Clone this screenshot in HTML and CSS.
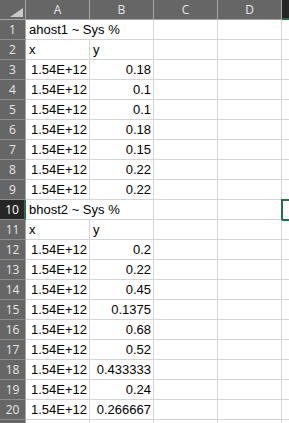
FILE: index.html
```html
<!DOCTYPE html>
<html lang="en">
<head>
  <meta charset="UTF-8">
  <title>Sheet1</title>
  <link rel="stylesheet" href="styles.css">
</head>
<body>
  <div class="sheet">
    <!-- column headers -->
    <div class="corner">
      <svg width="13" height="9" viewBox="0 0 13 9"><polygon points="0,9 13,0 13,9" fill="#c9c9c9"/></svg>
    </div>
    <div class="colhead">A</div>
    <div class="colhead">B</div>
    <div class="colhead">C</div>
    <div class="colhead">D</div>
    <div class="colhead active"></div>

    <div class="rowhead">1</div>
    <div class="cell span2">ahost1 ~ Sys %</div><div class="cell"></div><div class="cell"></div><div class="cell"></div>
    <div class="rowhead">2</div>
    <div class="cell">x</div><div class="cell">y</div><div class="cell"></div><div class="cell"></div><div class="cell"></div>
    <div class="rowhead">3</div>
    <div class="cell num">1.54E+12</div><div class="cell num">0.18</div><div class="cell"></div><div class="cell"></div><div class="cell"></div>
    <div class="rowhead">4</div>
    <div class="cell num">1.54E+12</div><div class="cell num">0.1</div><div class="cell"></div><div class="cell"></div><div class="cell"></div>
    <div class="rowhead">5</div>
    <div class="cell num">1.54E+12</div><div class="cell num">0.1</div><div class="cell"></div><div class="cell"></div><div class="cell"></div>
    <div class="rowhead">6</div>
    <div class="cell num">1.54E+12</div><div class="cell num">0.18</div><div class="cell"></div><div class="cell"></div><div class="cell"></div>
    <div class="rowhead">7</div>
    <div class="cell num">1.54E+12</div><div class="cell num">0.15</div><div class="cell"></div><div class="cell"></div><div class="cell"></div>
    <div class="rowhead">8</div>
    <div class="cell num">1.54E+12</div><div class="cell num">0.22</div><div class="cell"></div><div class="cell"></div><div class="cell"></div>
    <div class="rowhead">9</div>
    <div class="cell num">1.54E+12</div><div class="cell num">0.22</div><div class="cell"></div><div class="cell"></div><div class="cell"></div>
    <div class="rowhead active">10</div>
    <div class="cell span2">bhost2 ~ Sys %</div><div class="cell"></div><div class="cell"></div><div class="cell selected"></div>
    <div class="rowhead">11</div>
    <div class="cell">x</div><div class="cell">y</div><div class="cell"></div><div class="cell"></div><div class="cell"></div>
    <div class="rowhead">12</div>
    <div class="cell num">1.54E+12</div><div class="cell num">0.2</div><div class="cell"></div><div class="cell"></div><div class="cell"></div>
    <div class="rowhead">13</div>
    <div class="cell num">1.54E+12</div><div class="cell num">0.22</div><div class="cell"></div><div class="cell"></div><div class="cell"></div>
    <div class="rowhead">14</div>
    <div class="cell num">1.54E+12</div><div class="cell num">0.45</div><div class="cell"></div><div class="cell"></div><div class="cell"></div>
    <div class="rowhead">15</div>
    <div class="cell num">1.54E+12</div><div class="cell num">0.1375</div><div class="cell"></div><div class="cell"></div><div class="cell"></div>
    <div class="rowhead">16</div>
    <div class="cell num">1.54E+12</div><div class="cell num">0.68</div><div class="cell"></div><div class="cell"></div><div class="cell"></div>
    <div class="rowhead">17</div>
    <div class="cell num">1.54E+12</div><div class="cell num">0.52</div><div class="cell"></div><div class="cell"></div><div class="cell"></div>
    <div class="rowhead">18</div>
    <div class="cell num">1.54E+12</div><div class="cell num">0.433333</div><div class="cell"></div><div class="cell"></div><div class="cell"></div>
    <div class="rowhead">19</div>
    <div class="cell num">1.54E+12</div><div class="cell num">0.24</div><div class="cell"></div><div class="cell"></div><div class="cell"></div>
    <div class="rowhead">20</div>
    <div class="cell num">1.54E+12</div><div class="cell num">0.266667</div><div class="cell"></div><div class="cell"></div><div class="cell"></div>
    <div class="rowhead"></div>
    <div class="cell"></div><div class="cell"></div><div class="cell"></div><div class="cell"></div><div class="cell"></div>
  </div>
</body>
</html>
```

FILE: styles.css
```css
html, body {
  margin: 0;
  padding: 0;
  background-color: #fff;
  overflow: hidden;
}

.sheet {
  display: grid;
  grid-template-columns: 26px 64px 64px 64px 64px 64px;
  grid-template-rows: 20px;
  grid-auto-rows: 20px;
  font-family: "Liberation Sans", Arial, sans-serif;
}

.corner,
.colhead,
.rowhead {
  box-sizing: border-box;
  background-color: #666;
  color: #e6e6e6;
  font-family: "Open Sans", "Liberation Sans", sans-serif;
  font-size: 12px;
  display: flex;
  align-items: center;
  justify-content: center;
}

.corner {
  border-right: 1px solid #a6a6a6;
  border-bottom: 1px solid #a6a6a6;
  align-items: flex-end;
  justify-content: flex-end;
  padding: 0 2px 2px 0;
}

.colhead {
  border-right: 1px solid #a6a6a6;
  border-bottom: 1px solid #a6a6a6;
}

.colhead.active {
  background-color: #262626;
  border-right: none;
  border-bottom: 2px solid #217346;
}

.rowhead {
  border-right: 1px solid #a6a6a6;
  border-bottom: 1px solid #8c8c8c;
}

.rowhead.active {
  background-color: #262626;
  color: #fff;
  border-right: 2px solid #217346;
}

.cell {
  box-sizing: border-box;
  border-right: 1px solid #d4d4d4;
  border-bottom: 1px solid #d4d4d4;
  padding: 0 2px 1px 3px;
  display: flex;
  align-items: flex-end;
  font-size: 13px;
  line-height: 16px;
  color: #000;
  white-space: nowrap;
  overflow: hidden;
}

.num {
  justify-content: flex-end;
}

.span2 {
  grid-column: span 2;
}

.selected {
  outline: 2px solid #217346;
  outline-offset: -1px;
}
```
